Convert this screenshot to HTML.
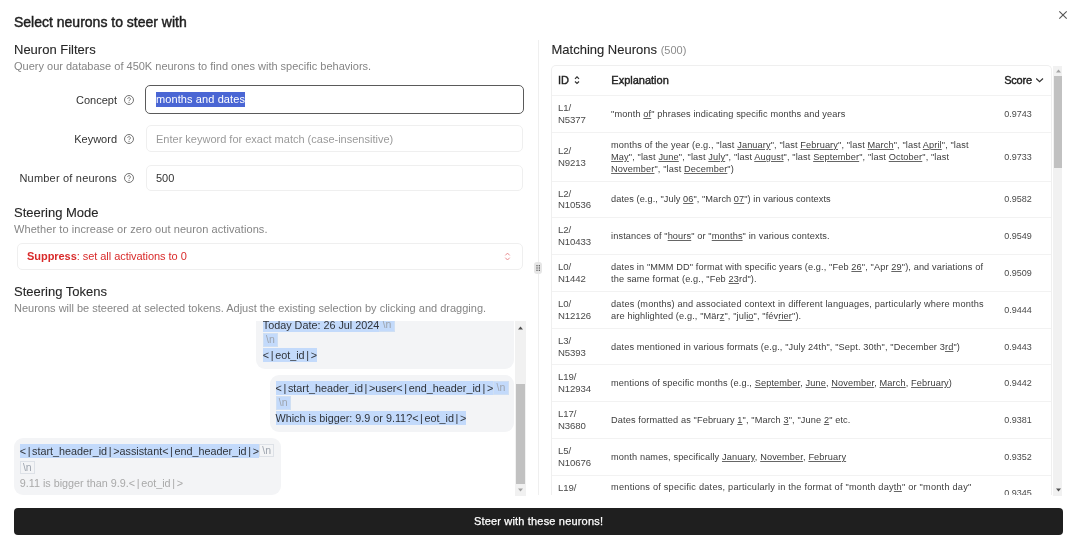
<!DOCTYPE html>
<html><head><meta charset="utf-8">
<style>
*{box-sizing:border-box;margin:0;padding:0}
html,body{width:1080px;height:551px;overflow:hidden;background:#fff}
body{position:relative;font-family:"Liberation Sans",sans-serif;color:#333}
.a{position:absolute;white-space:nowrap}
.title{left:14px;top:11.9px;font-size:14px;line-height:20px;color:#1f1f1f;-webkit-text-stroke:0.45px #1f1f1f}
.h2{font-size:13px;line-height:16px;color:#262626;-webkit-text-stroke:0.1px #262626}
.desc{font-size:11px;line-height:14px;color:#858585}
.lbl{font-size:11px;line-height:14px;color:#333;text-align:right}
.q{position:absolute;width:10px;height:10px;border:1px solid #666;border-radius:50%;font-size:7px;line-height:8px;text-align:center;color:#555}
.inp{position:absolute;border:1px solid #efefef;border-radius:5px;background:#fff}
.inp.focus{border:1px solid #5a5a5a}
.ph{font-size:11px;line-height:14px;color:#9a9a9a}
.val{font-size:11px;line-height:14px;color:#333}
.bub{position:absolute;background:#f3f4f6;border-radius:9px}
.tl{position:absolute;height:13.9px;white-space:nowrap;font-size:10.8px;line-height:15.9px;color:#30343a}
.tl i{font-style:normal;margin:0 1.65px}
.tl span{display:inline-block;height:13.9px;vertical-align:top}
.hl{background:#c3dafb}
.tl .nl{width:15.3px;border:1px solid #dde1e7;font-size:10.5px;line-height:11.9px;text-align:center;color:#9da4ae}
.tl .nl.u{height:12.6px;line-height:10.6px}
.tl .nl.h{background:#c3dafb;border-color:#cfdff3}
.tr{position:absolute;left:0;width:500px;border-bottom:1px solid #f2f2f2}
.td{position:absolute;top:0;bottom:0;display:flex;align-items:center;font-size:9.2px;line-height:11.8px;color:#3c3c3c;white-space:nowrap}
.td.id{left:6px;color:#4a4a4a;font-size:9.6px;letter-spacing:-0.12px;padding-bottom:0.4px}
.td.ex{left:59.1px;letter-spacing:0.12px;padding-top:1.4px}
.td.sc{left:452.2px;color:#4a4a4a;font-size:9px;padding-top:1.4px}
.ex u{text-decoration:underline;text-underline-offset:0.8px;text-decoration-thickness:0.8px;text-decoration-color:#666}
.th{position:absolute;top:0;height:29.7px;padding-bottom:2px;display:flex;align-items:center;font-size:11px;color:#222;-webkit-text-stroke:0.4px #222}
</style></head><body><div id="root" style="position:absolute;left:0;top:0;width:1080px;height:551px;will-change:transform">

<div class="a title">Select neurons to steer with</div>

<div class="a h2" style="left:14px;top:41.5px">Neuron Filters</div>
<div class="a desc" style="left:14px;top:59px">Query our database of 450K neurons to find ones with specific behaviors.</div>

<!-- Concept -->
<div class="a lbl" style="right:963px;top:93.2px">Concept</div>
<svg class="a" style="left:123.1px;top:93.8px" width="12" height="12" viewBox="0 0 12 12"><circle cx="6" cy="6" r="4.5" fill="none" stroke="#6b6b6b" stroke-width="0.95"/><path d="M4.7 4.9 a1.35 1.35 0 1 1 2.1 1.15 c-0.5 0.3 -0.8 0.55 -0.8 1.15" fill="none" stroke="#6b6b6b" stroke-width="0.9"/><circle cx="6" cy="8.55" r="0.55" fill="#6b6b6b"/></svg>
<div class="inp focus" style="left:145.3px;top:85px;width:378.5px;height:28.7px"></div>
<div class="a" style="left:156px;top:92.3px;height:14.4px;background:#4a66d4;color:#fff;font-size:11px;line-height:15.8px;letter-spacing:0.1px;padding-right:0.4px">months and dates</div>

<!-- Keyword -->
<div class="a lbl" style="right:963px;top:132.2px">Keyword</div>
<svg class="a" style="left:123.1px;top:133.2px" width="12" height="12" viewBox="0 0 12 12"><circle cx="6" cy="6" r="4.5" fill="none" stroke="#6b6b6b" stroke-width="0.95"/><path d="M4.7 4.9 a1.35 1.35 0 1 1 2.1 1.15 c-0.5 0.3 -0.8 0.55 -0.8 1.15" fill="none" stroke="#6b6b6b" stroke-width="0.9"/><circle cx="6" cy="8.55" r="0.55" fill="#6b6b6b"/></svg>
<div class="inp" style="left:146px;top:125px;width:377px;height:27px"></div>
<div class="a ph" style="left:156px;top:132.2px">Enter keyword for exact match (case-insensitive)</div>

<!-- Number -->
<div class="a lbl" style="right:963px;top:171.4px;letter-spacing:0.2px">Number of neurons</div>
<svg class="a" style="left:123.1px;top:172.1px" width="12" height="12" viewBox="0 0 12 12"><circle cx="6" cy="6" r="4.5" fill="none" stroke="#6b6b6b" stroke-width="0.95"/><path d="M4.7 4.9 a1.35 1.35 0 1 1 2.1 1.15 c-0.5 0.3 -0.8 0.55 -0.8 1.15" fill="none" stroke="#6b6b6b" stroke-width="0.9"/><circle cx="6" cy="8.55" r="0.55" fill="#6b6b6b"/></svg>
<div class="inp" style="left:146px;top:164.5px;width:377px;height:26.8px"></div>
<div class="a val" style="left:156px;top:171.2px">500</div>

<div class="a h2" style="left:14px;top:204.9px">Steering Mode</div>
<div class="a desc" style="left:14px;top:222.3px;letter-spacing:0.08px">Whether to increase or zero out neuron activations.</div>
<div class="inp" style="left:16.5px;top:243.1px;width:506px;height:26.6px"></div>
<div class="a" style="left:27px;top:249.1px;font-size:11px;line-height:14px;color:#d92b2b;letter-spacing:-0.05px"><b>Suppress</b>: set all activations to 0</div>
<svg class="a" style="left:503px;top:251px" width="9" height="11" viewBox="0 0 9 11"><path d="M2.3 4.4 L4.5 2.1 L6.7 4.4 M2.3 6.7 L4.5 9 L6.7 6.7" fill="none" stroke="#e77f83" stroke-width="0.9"/></svg>

<div class="a h2" style="left:14px;top:283.9px">Steering Tokens</div>
<div class="a desc" style="left:14px;top:300.9px">Neurons will be steered at selected tokens. Adjust the existing selection by clicking and dragging.</div>

<!-- token scroll container -->
<div class="a" style="left:14px;top:320.5px;width:512px;height:175px;overflow:hidden">
  <div class="bub" style="left:242.3px;top:-40px;width:258.1px;height:88.5px"></div>
  <div class="tl" style="left:248.8px;top:-2.4px"><span class="hl">Today Date: 26 Jul 2024</span><span class="nl h">\n</span></div>
  <div class="tl" style="left:248.8px;top:12.6px"><span class="nl h">\n</span></div>
  <div class="tl" style="left:248.8px;top:27.6px"><span class="hl">&lt;<i>|</i>eot_id<i>|</i>&gt;</span></div>

  <div class="bub" style="left:256px;top:54.5px;width:244.4px;height:57.3px"></div>
  <div class="tl" style="left:261.5px;top:60.7px"><span class="hl">&lt;<i>|</i>start_header_id<i>|</i>&gt;user&lt;<i>|</i>end_header_id<i>|</i>&gt;</span><span class="nl h">\n</span></div>
  <div class="tl" style="left:261.5px;top:75.8px"><span class="nl h">\n</span></div>
  <div class="tl" style="left:261.5px;top:90.8px"><span class="hl">Which is bigger: 9.9 or 9.11?&lt;<i>|</i>eot_id<i>|</i>&gt;</span></div>

  <div class="bub" style="left:0px;top:117.5px;width:267px;height:57px"></div>
  <div class="tl" style="left:5.7px;top:123.7px"><span class="hl">&lt;<i>|</i>start_header_id<i>|</i>&gt;assistant&lt;<i>|</i>end_header_id<i>|</i>&gt;</span><span class="nl u">\n</span></div>
  <div class="tl" style="left:5.7px;top:140.7px"><span class="nl u">\n</span></div>
  <div class="tl" style="left:5.7px;top:155.6px;color:#a9a9a9"><span>9.11 is bigger than 9.9.&lt;<i>|</i>eot_id<i>|</i>&gt;</span></div>
  <!-- scrollbar -->
  <div style="position:absolute;left:501.3px;top:0;width:10.3px;height:175px;background:#f1f1f1"></div>
  <div style="position:absolute;left:501.8px;top:63.5px;width:9.3px;height:99.8px;background:#c1c1c1"></div>
  <svg style="position:absolute;left:502px;top:4px" width="9" height="6"><path d="M2 4.5 L4.5 1.5 L7 4.5Z" fill="#505050"/></svg>
  <svg style="position:absolute;left:502px;top:166px" width="9" height="6"><path d="M2 1.5 L4.5 4.5 L7 1.5Z" fill="#a3a3a3"/></svg>
</div>

<!-- divider -->
<div class="a" style="left:538px;top:40.3px;width:1px;height:455.2px;background:#efefef"></div>
<div class="a" style="left:534.3px;top:262.2px;width:8.2px;height:11.6px;background:#e6e6e6;border-radius:3px"></div>
<svg class="a" style="left:534.3px;top:262.2px" width="8" height="12"><g fill="#4a4a4a"><circle cx="3" cy="3.7" r=".7"/><circle cx="5.3" cy="3.7" r=".7"/><circle cx="3" cy="5.95" r=".7"/><circle cx="5.3" cy="5.95" r=".7"/><circle cx="3" cy="8.2" r=".7"/><circle cx="5.3" cy="8.2" r=".7"/></g></svg>

<!-- close -->
<svg class="a" style="left:1058px;top:10px" width="10" height="10"><path d="M1.3 1.3 L8.7 8.7 M8.7 1.3 L1.3 8.7" stroke="#555" stroke-width="1.1"/></svg>

<!-- right panel -->
<div class="a h2" style="left:551.5px;top:42.2px">Matching Neurons <span style="font-size:11px;color:#8c8c8c;-webkit-text-stroke:0">(500)</span></div>

<div class="a" style="left:551px;top:65.4px;width:500.5px;height:430.1px;border:1px solid #efefef;border-bottom:none;border-radius:5px 5px 0 0;overflow:hidden">
  <div class="tr" style="top:0;height:29.7px">
    <div class="th" style="left:6px">ID<svg style="margin-left:5px" width="6" height="9" viewBox="0 0 6 9"><path d="M1 2.8 L3 0.8 L5 2.8 M1 5.5 L3 7.5 L5 5.5" fill="none" stroke="#333" stroke-width="1.2"/></svg></div>
    <div class="th" style="left:59.3px">Explanation</div>
    <div class="th" style="left:452.2px;letter-spacing:-0.2px">Score<svg style="margin-left:3.5px" width="9" height="6" viewBox="0 0 9 6"><path d="M1.2 1.5 L4.6 4.6 L8 1.5" fill="none" stroke="#333" stroke-width="1.2"/></svg></div>
  </div>
<div class="tr" style="top:29.70px;height:37.20px"><div class="td id"><div>L1/<br>N5377</div></div><div class="td ex"><div><span class="ln" style="letter-spacing:0.120px">"month <u>of</u>" phrases indicating specific months and years</span></div></div><div class="td sc"><div>0.9743</div></div></div>
<div class="tr" style="top:66.90px;height:48.90px"><div class="td id"><div>L2/<br>N9213</div></div><div class="td ex"><div><span class="ln" style="letter-spacing:0.120px">months of the year (e.g., "last <u>January</u>", "last <u>February</u>", "last <u>March</u>", "last <u>April</u>", "last</span><br><span class="ln" style="letter-spacing:0.120px"><u>May</u>", "last <u>June</u>", "last <u>July</u>", "last <u>August</u>", "last <u>September</u>", "last <u>October</u>", "last</span><br><span class="ln" style="letter-spacing:0.120px"><u>November</u>", "last <u>December</u>")</span></div></div><div class="td sc"><div>0.9733</div></div></div>
<div class="tr" style="top:115.80px;height:36.00px"><div class="td id"><div>L2/<br>N10536</div></div><div class="td ex"><div><span class="ln" style="letter-spacing:0.070px">dates (e.g., "July <u>06</u>", "March <u>07</u>") in various contexts</span></div></div><div class="td sc"><div>0.9582</div></div></div>
<div class="tr" style="top:151.80px;height:37.10px"><div class="td id"><div>L2/<br>N10433</div></div><div class="td ex"><div><span class="ln" style="letter-spacing:0.120px">instances of "<u>hours</u>" or "<u>months</u>" in various contexts.</span></div></div><div class="td sc"><div>0.9549</div></div></div>
<div class="tr" style="top:188.90px;height:37.00px"><div class="td id"><div>L0/<br>N1442</div></div><div class="td ex"><div><span class="ln" style="letter-spacing:0.120px">dates in "MMM DD" format with specific years (e.g., "Feb <u>26</u>", "Apr <u>29</u>"), and variations of</span><br><span class="ln" style="letter-spacing:0.120px">the same format (e.g., "Feb <u>23</u>rd").</span></div></div><div class="td sc"><div>0.9509</div></div></div>
<div class="tr" style="top:225.90px;height:36.90px"><div class="td id"><div>L0/<br>N12126</div></div><div class="td ex"><div><span class="ln" style="letter-spacing:0.170px">dates (months) and associated context in different languages, particularly where months</span><br><span class="ln" style="letter-spacing:0.120px">are highlighted (e.g., "Mär<u>z</u>", "jul<u>io</u>", "fév<u>rier</u>").</span></div></div><div class="td sc"><div>0.9444</div></div></div>
<div class="tr" style="top:262.80px;height:36.30px"><div class="td id"><div>L3/<br>N5393</div></div><div class="td ex"><div><span class="ln" style="letter-spacing:0.120px">dates mentioned in various formats (e.g., "July 24th", "Sept. 30th", "December 3<u>rd</u>")</span></div></div><div class="td sc"><div>0.9443</div></div></div>
<div class="tr" style="top:299.10px;height:36.80px"><div class="td id"><div>L19/<br>N12934</div></div><div class="td ex"><div><span class="ln" style="letter-spacing:0.120px">mentions of specific months (e.g., <u>September</u>, <u>June</u>, <u>November</u>, <u>March</u>, <u>February</u>)</span></div></div><div class="td sc"><div>0.9442</div></div></div>
<div class="tr" style="top:335.90px;height:37.00px"><div class="td id"><div>L17/<br>N3680</div></div><div class="td ex"><div><span class="ln" style="letter-spacing:0.120px">Dates formatted as "February <u>1</u>", "March <u>3</u>", "June <u>2</u>" etc.</span></div></div><div class="td sc"><div>0.9381</div></div></div>
<div class="tr" style="top:372.90px;height:36.40px"><div class="td id"><div>L5/<br>N10676</div></div><div class="td ex"><div><span class="ln" style="letter-spacing:0.120px">month names, specifically <u>January</u>, <u>November</u>, <u>February</u></span></div></div><div class="td sc"><div>0.9352</div></div></div>
<div class="tr" style="top:409.30px;height:36.80px"><div class="td id"><div>L19/<br>N12843</div></div><div class="td ex"><div><span class="ln" style="letter-spacing:0.220px">mentions of specific dates, particularly in the format of "month day<u>th</u>" or "month day"</span><br>&nbsp;</div></div><div class="td sc"><div>0.9345</div></div></div>
</div>
<!-- right scrollbar -->
<div class="a" style="left:1053.2px;top:66px;width:9.3px;height:429.5px;background:#f1f1f1"></div>
<div class="a" style="left:1053.6px;top:76.3px;width:8.6px;height:92.2px;background:#c1c1c1"></div>
<svg class="a" style="left:1053.5px;top:68px" width="9" height="6"><path d="M2 4.5 L4.5 1.5 L7 4.5Z" fill="#a3a3a3"/></svg>
<svg class="a" style="left:1053.5px;top:487px" width="9" height="6"><path d="M2 1.5 L4.5 4.5 L7 1.5Z" fill="#505050"/></svg>

<!-- button -->
<div class="a" style="left:14px;top:507.6px;width:1049px;height:27.2px;background:#1f1f1f;border-radius:4px;color:#fff;font-size:11px;line-height:27.2px;text-align:center;letter-spacing:0.18px;-webkit-text-stroke:0.25px #fff">Steer with these neurons!</div>

</div></body></html>
